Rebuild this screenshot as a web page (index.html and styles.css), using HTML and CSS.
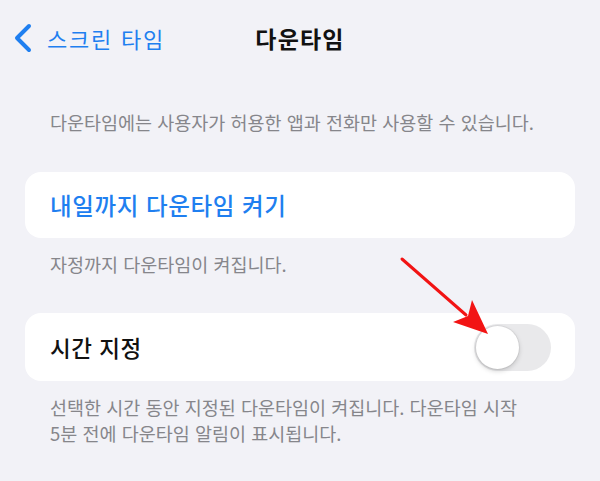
FILE: index.html
```html
<!DOCTYPE html>
<html lang="ko">
<head>
<meta charset="utf-8">
<link rel="stylesheet" href="styles.css">
</head>
<body>
<div class="page">
  <header class="nav">
    <a class="back">
      <svg class="chev" width="20" height="30" viewBox="0 0 20 30"><path d="M16 3 L4 15 L16 27" fill="none" stroke="#1f7ff0" stroke-width="4" stroke-linecap="round" stroke-linejoin="round"/></svg>
      <span>스크린 타임</span>
    </a>
    <h1 class="title">다운타임</h1>
    <span></span>
  </header>
  <main class="content">
    <p class="note first">다운타임에는 사용자가 허용한 앱과 전화만 사용할 수 있습니다.</p>
    <div class="card">
      <span class="link">내일까지 다운타임 켜기</span>
    </div>
    <p class="note">자정까지 다운타임이 켜집니다.</p>
    <div class="card card-tall">
      <span class="label">시간 지정</span>
      <span class="switch"><span class="knob"></span></span>
    </div>
    <p class="note">선택한 시간 동안 지정된 다운타임이 켜집니다. 다운타임 시작<br>5분 전에 다운타임 알림이 표시됩니다.</p>
  </main>
  <svg class="arrow" width="600" height="481" viewBox="0 0 600 481">
    <line x1="402" y1="259" x2="466" y2="315" stroke="#f21414" stroke-width="3" stroke-linecap="round"/>
    <path d="M488 334 L453 322 L468 316 L472 300 Z" fill="#f21414"/>
  </svg>
</div>
</body>
</html>
```
FILE: styles.css
```css
* { box-sizing: border-box; }
html, body { margin: 0; padding: 0; }
body {
  background: #f2f2f7;
  font-family: "Noto Sans CJK KR", "Noto Sans", sans-serif;
  width: 600px;
  height: 481px;
  overflow: hidden;
}
.page { position: relative; width: 600px; height: 481px; }
.nav {
  height: 76px;
  display: grid;
  grid-template-columns: 1fr auto 1fr;
  align-items: center;
}
.back {
  display: flex;
  align-items: center;
  gap: 14px;
  padding-left: 13px;
  color: #1f7ff0;
  font-size: 22px;
  letter-spacing: 1.8px;
}
.chev { display: block; }
.title {
  margin: 0;
  font-size: 23px;
  font-weight: 700;
  color: #111;
  letter-spacing: 1.2px;
}
.content { padding: 0 25px; }
.note {
  margin: 13px 0 0;
  padding-left: 25px;
  font-size: 18.5px;
  line-height: 26px;
  color: #86868b;
}
.note.first { margin-top: 33px; margin-bottom: 37px; }
.card {
  background: #fff;
  border-radius: 16px;
  height: 66px;
  display: flex;
  align-items: center;
  justify-content: space-between;
  padding: 0 24px 0 25px;
}
.card-tall { height: 68px; margin-top: 36px; }
.link { color: #1f7ff0; font-size: 23.5px; font-weight: 500; letter-spacing: 0.6px; }
.label { color: #111; font-size: 22.5px; font-weight: 500; letter-spacing: 0.5px; }
.switch {
  width: 77px;
  height: 47px;
  border-radius: 24px;
  background: #e9e9eb;
  padding: 2px;
  display: flex;
}
.knob {
  width: 43px;
  height: 43px;
  border-radius: 50%;
  background: #fff;
  box-shadow: 0 2px 5px rgba(0,0,0,0.18), 0 0 0 1px rgba(0,0,0,0.05);
}
.arrow { position: absolute; left: 0; top: 0; pointer-events: none; }
```
